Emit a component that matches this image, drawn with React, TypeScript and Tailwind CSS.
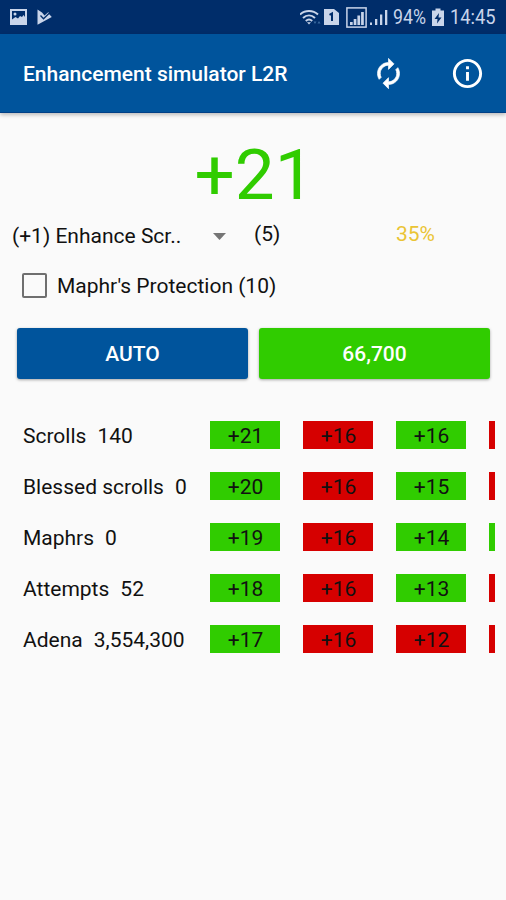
import { MdInfoOutline } from "react-icons/md";

type Result = { level: string; success: boolean };

const stats = [
  { label: "Scrolls", value: "140" },
  { label: "Blessed scrolls", value: "0" },
  { label: "Maphrs", value: "0" },
  { label: "Attempts", value: "52" },
  { label: "Adena", value: "3,554,300" },
];

// newest results first, each column holds five attempts
const history: Result[][] = [
  [
    { level: "+21", success: true },
    { level: "+20", success: true },
    { level: "+19", success: true },
    { level: "+18", success: true },
    { level: "+17", success: true },
  ],
  [
    { level: "+16", success: false },
    { level: "+16", success: false },
    { level: "+16", success: false },
    { level: "+16", success: false },
    { level: "+16", success: false },
  ],
  [
    { level: "+16", success: true },
    { level: "+15", success: true },
    { level: "+14", success: true },
    { level: "+13", success: true },
    { level: "+12", success: false },
  ],
  [
    { level: "", success: false },
    { level: "", success: false },
    { level: "", success: true },
    { level: "", success: false },
    { level: "", success: false },
  ],
];

const StatusBar = () => (
  <div className="h-[34px] bg-[#002d6a] flex items-center justify-between pl-[10px] pr-[11px] text-[#c9d5ea]">
    <div className="flex items-center gap-[10px]">
      <svg width="17" height="16" viewBox="0 0 17 16">
        <rect x="1" y="1" width="15" height="14" fill="none" stroke="currentColor" strokeWidth="2" />
        <path d="M2 10.500l3.500-2.500 2.500 1.500 2-2.500 2 1 1.500-2 1.500 2V14H2z" fill="currentColor" />
        <circle cx="5" cy="5" r="1.500" fill="currentColor" />
      </svg>
      <svg width="15" height="16" viewBox="0 0 15 16">
        <path d="M0.500 0.500L5 3.500 7.500 6.500 11.500 3 12 5 14.800 8 0.500 15.800z" fill="currentColor" />
        <path d="M3.500 6.500l3 3.200 6.200-6" fill="none" stroke="#002d6a" strokeWidth="1.300" />
      </svg>
    </div>
    <div className="flex items-center">
      <svg width="22" height="17" viewBox="0 0 22 17" fill="none">
        <path d="M0 5.500C5 .8 13 .8 18 5.500M3 9C6.600 5.700 11.400 5.700 15 9M5.800 12c2-1.800 4.400-1.800 6.400 0" stroke="currentColor" strokeWidth="2" />
        <path d="M7 13.200h4L9 15.500z" fill="currentColor" />
        <path d="M13.500 12.500h3L15 15zM17.500 14.500h3L19 12z" fill="#39699f" />
      </svg>
      <svg className="ml-[2px]" width="15" height="18" viewBox="0 0 15 18">
        <path d="M0 1h10l5 4v12H0z" fill="currentColor" />
        <path d="M5.500 6.800L8 5.500V13" fill="none" stroke="#002d6a" strokeWidth="2" />
      </svg>
      <svg className="ml-[7px]" width="21" height="21" viewBox="0 0 21 21">
        <rect x="0.900" y="0.900" width="19.200" height="19.200" fill="none" stroke="currentColor" strokeWidth="1.500" />
        <path d="M4 15h2.700v3H4zM7.700 12h2.700v6H7.700zM11.400 8.500h2.700V18h-2.700zM15.100 5h2.700v13h-2.700z" fill="currentColor" />
      </svg>
      <svg className="ml-[3px]" width="18" height="18" viewBox="0 0 18 18">
        <path d="M0 14.500h2v2.500H0zM5 11h2.300v6H5zM10 6.500h2.300V17H10zM15 2h2.300v15H15z" fill="currentColor" />
      </svg>
      <span className="ml-[5px] w-[34px] pt-[2px] text-[19.500px] leading-none whitespace-nowrap">
        <span className="inline-block origin-left scale-x-[0.91]">94%</span>
      </span>
      <svg className="ml-[5px]" width="12" height="19" viewBox="0 0 12 19">
        <path d="M3.500 0.500h5v2H12V18H0V2.500h3.500z" fill="currentColor" />
        <path d="M7 5L2.500 11H5.500L5 15.500 9.500 9.500H6.500z" fill="#002d6a" />
      </svg>
      <span className="ml-[6px] w-[45px] pt-[2px] text-[19.500px] leading-none whitespace-nowrap">
        <span className="inline-block origin-left scale-x-[0.94]">14:45</span>
      </span>
    </div>
  </div>
);

const ResetIcon = () => (
  <svg width="33" height="33" viewBox="0 0 24 24" fill="currentColor" stroke="currentColor" strokeWidth="0.5">
    <path d="M12 6v3l4-4-4-4v3c-4.420 0-8 3.580-8 8 0 1.570.46 3.030 1.240 4.260L6.700 14.800c-.45-.83-.7-1.790-.7-2.800 0-3.310 2.690-6 6-6z" />
    <path d="M18.760 7.740L17.300 9.200c.44.840.7 1.790.7 2.800 0 3.310-2.690 6-6 6v-3l-4 4 4 4v-3c4.420 0 8-3.580 8-8 0-1.570-.46-3.030-1.240-4.260z" />
  </svg>
);

const AppBar = () => (
  <header className="relative h-[79px] bg-[#00549c] border-b border-[#003f86] shadow-[0_2px_4px_rgba(0,0,0,0.25)] flex items-center pl-[23px] pr-[21px] text-white">
    <h1 className="flex-1 pt-[3px] text-[21px] font-medium whitespace-nowrap">Enhancement simulator L2R</h1>
    <button className="mr-[45px] pt-px" aria-label="Reset">
      <ResetIcon />
    </button>
    <button aria-label="Info">
      <MdInfoOutline size={35} />
    </button>
  </header>
);

const ResultChip = ({ level, success }: Result) => (
  <div
    className={`h-[28px] w-[70px] shrink-0 flex items-center justify-center pt-[3px] pl-px text-[21px] ${
      success ? "bg-[#30cc00]" : "bg-[#d60000]"
    }`}
  >
    {level}
  </div>
);

const App = () => {
  return (
    <div className="h-[900px] w-[506px] overflow-hidden bg-[#fafafa] font-['Roboto',sans-serif] text-[21px] text-[#111111]">
      <StatusBar />
      <AppBar />

      <main>
        <p className="mt-[20px] h-[84px] pl-[3px] text-center text-[71px] leading-[84px] text-[#30cc00]">+21</p>

        <div className="flex h-[40px] items-center pl-[12px]">
          <span className="w-[201px] whitespace-nowrap">(+1) Enhance Scr..</span>
          <svg className="mb-[2px]" width="13" height="7" viewBox="0 0 13 7">
            <path d="M0 0h13L6.500 7z" fill="#757575" />
          </svg>
          <span className="ml-[28px] w-[142px] pb-[4px]">(5)</span>
          <span className="pb-[4px] text-[#eac435]">35%</span>
        </div>

        <label className="mt-[16px] flex h-[24px] items-center pl-[22px]">
          <span className="h-[25px] w-[25px] shrink-0 rounded-[2px] border-[2.500px] border-[#6f6f6f]" />
          <span className="ml-[10px] pt-[3px] whitespace-nowrap">Maphr's Protection (10)</span>
        </label>

        <div className="mt-[31px] flex gap-[11px] pl-[17px] pr-[16px] text-[21px] font-medium text-white">
          <button className="h-[51px] flex-1 rounded-[3px] bg-[#00549c] pt-[2px] shadow-[0_1px_3px_rgba(0,0,0,0.35)]">
            AUTO
          </button>
          <button className="h-[51px] flex-1 rounded-[3px] bg-[#30cc00] pt-[2px] shadow-[0_1px_3px_rgba(0,0,0,0.35)]">
            66,700
          </button>
        </div>

        <div className="mt-[42px] flex pl-[23px] pr-[11px]">
          <div className="flex w-[187px] shrink-0 flex-col gap-[23px]">
            {stats.map((stat) => (
              <div key={stat.label} className="flex h-[28px] items-center gap-[11px] pt-[4px] whitespace-nowrap">
                <span>{stat.label}</span>
                <span>{stat.value}</span>
              </div>
            ))}
          </div>
          <div className="flex min-w-0 flex-1 gap-[23px] overflow-hidden">
            {history.map((column, i) => (
              <div key={i} className="flex shrink-0 flex-col gap-[23px]">
                {column.map((result, j) => (
                  <ResultChip key={j} {...result} />
                ))}
              </div>
            ))}
          </div>
        </div>
      </main>
    </div>
  );
};

export default App;
